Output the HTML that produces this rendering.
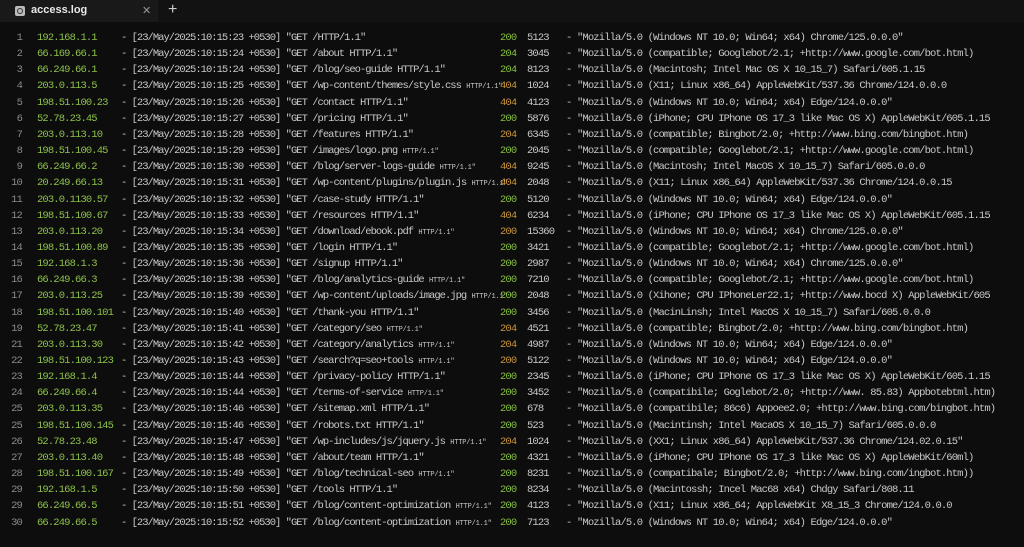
<!DOCTYPE html>
<html><head><meta charset="utf-8"><style>
html,body{margin:0;padding:0;width:1024px;height:547px;background:#0d0d0d;overflow:hidden}
body{font-family:"Liberation Mono","DejaVu Sans Mono",monospace;color:#c9c9c9}
.bar{position:absolute;left:0;top:0;width:1024px;height:22px;background:#121212}
.tab{position:absolute;left:0;top:0;width:158px;height:22px;background:#191919;font-family:"Liberation Sans",sans-serif;font-size:11px;font-weight:bold;color:#e8e8e8}
.tab .ic{position:absolute;left:15px;top:6px;width:10px;height:10px;border-radius:2px;background:#bbb}
.tab .ic:after{content:"";position:absolute;left:2px;top:2px;width:4px;height:4px;border:1px solid #333;border-radius:50%}
.tab .t{position:absolute;left:31px;top:4px}
.tab .x{position:absolute;left:142px;top:4px;font-weight:normal;color:#999;font-size:11px}
.plus{position:absolute;left:168px;top:1px;color:#ccc;font-family:"Liberation Sans",sans-serif;font-size:16px}
.r{position:absolute;left:0;height:16px;width:1024px;font-size:10.5px;letter-spacing:-0.87px;line-height:16px;white-space:pre}
.r span{position:absolute;top:0}
.n{right:1002px;color:#8a8a8a;text-align:right}
.ip{left:37px;color:#8cc04a}
.r span.m{left:121px;letter-spacing:-0.99px}
.s{left:500px}
.g{color:#86bf3e}.a{color:#c8953a}
.z{left:527px}
.d{left:566px}
.u{left:577px}
small{font-size:7px;letter-spacing:-0.2px}
</style></head><body>
<div class="bar"></div>
<div class="tab"><div class="ic"></div><div class="t">access.log</div><div class="x">✕</div></div>
<div class="plus">+</div>
<div class="r" style="top:30px"><span class="n">1</span><span class="ip">192.168.1.1</span><span class="m">- [23/May/2025:10:15:23 +0530] "GET /HTTP/1.1"</span><span class="s g">200</span><span class="z">5123</span><span class="d">-</span><span class="u">"Mozilla/5.0 (Windows NT 10.0; Win64; x64) Chrome/125.0.0.0"</span></div>
<div class="r" style="top:46.15px"><span class="n">2</span><span class="ip">66.169.66.1</span><span class="m">- [23/May/2025:10:15:24 +0530] "GET /about HTTP/1.1"</span><span class="s g">204</span><span class="z">3045</span><span class="d">-</span><span class="u">"Mozilla/5.0 (compatible; Googlebot/2.1; +http://www.google.com/bot.html)</span></div>
<div class="r" style="top:62.3px"><span class="n">3</span><span class="ip">66.249.66.1</span><span class="m">- [23/May/2025:10:15:24 +0530] "GET /blog/seo-guide HTTP/1.1"</span><span class="s g">204</span><span class="z">8123</span><span class="d">-</span><span class="u">"Mozilla/5.0 (Macintosh; Intel Mac OS X 10_15_7) Safari/605.1.15</span></div>
<div class="r" style="top:78.45px"><span class="n">4</span><span class="ip">203.0.113.5</span><span class="m">- [23/May/2025:10:15:25 +0530] "GET /wp-content/themes/style.css <small>HTTP/1.1"</small></span><span class="s a">404</span><span class="z">1024</span><span class="d">-</span><span class="u">"Mozilla/5.0 (X11; Linux x86_64) AppleWebKit/537.36 Chrome/124.0.0.0</span></div>
<div class="r" style="top:94.6px"><span class="n">5</span><span class="ip">198.51.100.23</span><span class="m">- [23/May/2025:10:15:26 +0530] "GET /contact HTTP/1.1"</span><span class="s a">404</span><span class="z">4123</span><span class="d">-</span><span class="u">"Mozilla/5.0 (Windows NT 10.0; Win64; x64) Edge/124.0.0.0"</span></div>
<div class="r" style="top:110.75px"><span class="n">6</span><span class="ip">52.78.23.45</span><span class="m">- [23/May/2025:10:15:27 +0530] "GET /pricing HTTP/1.1"</span><span class="s g">200</span><span class="z">5876</span><span class="d">-</span><span class="u">"Mozilla/5.0 (iPhone; CPU IPhone OS 17_3 like Mac OS X) AppleWebKit/605.1.15</span></div>
<div class="r" style="top:126.9px"><span class="n">7</span><span class="ip">203.0.113.10</span><span class="m">- [23/May/2025:10:15:28 +0530] "GET /features HTTP/1.1"</span><span class="s a">204</span><span class="z">6345</span><span class="d">-</span><span class="u">"Mozilla/5.0 (compatible; Bingbot/2.0; +http://www.bing.com/bingbot.htm)</span></div>
<div class="r" style="top:143.05px"><span class="n">8</span><span class="ip">198.51.100.45</span><span class="m">- [23/May/2025:10:15:29 +0530] "GET /images/logo.png <small>HTTP/1.1"</small></span><span class="s g">200</span><span class="z">2045</span><span class="d">-</span><span class="u">"Mozilla/5.0 (compatible; Googlebot/2.1; +http://www.google.com/bot.html)</span></div>
<div class="r" style="top:159.2px"><span class="n">9</span><span class="ip">66.249.66.2</span><span class="m">- [23/May/2025:10:15:30 +0530] "GET /blog/server-logs-guide <small>HTTP/1.1"</small></span><span class="s a">404</span><span class="z">9245</span><span class="d">-</span><span class="u">"Mozilla/5.0 (Macintosh; Intel MacOS X 10_15_7) Safari/605.0.0.0</span></div>
<div class="r" style="top:175.35px"><span class="n">10</span><span class="ip">20.249.66.13</span><span class="m">- [23/May/2025:10:15:31 +0530] "GET /wp-content/plugins/plugin.js <small>HTTP/1.1"</small></span><span class="s a">404</span><span class="z">2048</span><span class="d">-</span><span class="u">"Mozilla/5.0 (X11; Linux x86_64) AppleWebKit/537.36 Chrome/124.0.0.15</span></div>
<div class="r" style="top:191.5px"><span class="n">11</span><span class="ip">203.0.1130.57</span><span class="m">- [23/May/2025:10:15:32 +0530] "GET /case-study HTTP/1.1"</span><span class="s g">200</span><span class="z">5120</span><span class="d">-</span><span class="u">"Mozilla/5.0 (Windows NT 10.0; Win64; x64) Edge/124.0.0.0"</span></div>
<div class="r" style="top:207.65px"><span class="n">12</span><span class="ip">198.51.100.67</span><span class="m">- [23/May/2025:10:15:33 +0530] "GET /resources HTTP/1.1"</span><span class="s a">404</span><span class="z">6234</span><span class="d">-</span><span class="u">"Mozilla/5.0 (iPhone; CPU IPhone OS 17_3 like Mac OS X) AppleWebKit/605.1.15</span></div>
<div class="r" style="top:223.8px"><span class="n">13</span><span class="ip">203.0.113.20</span><span class="m">- [23/May/2025:10:15:34 +0530] "GET /download/ebook.pdf <small>HTTP/1.1"</small></span><span class="s a">200</span><span class="z">15360</span><span class="d">-</span><span class="u">"Mozilla/5.0 (Windows NT 10.0; Win64; x64) Chrome/125.0.0.0"</span></div>
<div class="r" style="top:239.95px"><span class="n">14</span><span class="ip">198.51.100.89</span><span class="m">- [23/May/2025:10:15:35 +0530] "GET /login HTTP/1.1"</span><span class="s g">200</span><span class="z">3421</span><span class="d">-</span><span class="u">"Mozilla/5.0 (compatible; Googlebot/2.1; +http://www.google.com/bot.html)</span></div>
<div class="r" style="top:256.1px"><span class="n">15</span><span class="ip">192.168.1.3</span><span class="m">- [23/May/2025:10:15:36 +0530] "GET /signup HTTP/1.1"</span><span class="s g">200</span><span class="z">2987</span><span class="d">-</span><span class="u">"Mozilla/5.0 (Windows NT 10.0; Win64; x64) Chrome/125.0.0.0"</span></div>
<div class="r" style="top:272.25px"><span class="n">16</span><span class="ip">66.249.66.3</span><span class="m">- [23/May/2025:10:15:38 +0530] "GET /blog/analytics-guide <small>HTTP/1.1"</small></span><span class="s g">200</span><span class="z">7210</span><span class="d">-</span><span class="u">"Mozilla/5.0 (compatible; Googlebot/2.1; +http://www.google.com/bot.html)</span></div>
<div class="r" style="top:288.4px"><span class="n">17</span><span class="ip">203.0.113.25</span><span class="m">- [23/May/2025:10:15:39 +0530] "GET /wp-content/uploads/image.jpg <small>HTTP/1.1"</small></span><span class="s g">200</span><span class="z">2048</span><span class="d">-</span><span class="u">"Mozilla/5.0 (Xihone; CPU IPhoneLer22.1; +http://www.bocd X) AppleWebKit/605</span></div>
<div class="r" style="top:304.55px"><span class="n">18</span><span class="ip">198.51.100.101</span><span class="m">- [23/May/2025:10:15:40 +0530] "GET /thank-you HTTP/1.1"</span><span class="s g">200</span><span class="z">3456</span><span class="d">-</span><span class="u">"Mozilla/5.0 (MacinLinsh; Intel MacOS X 10_15_7) Safari/605.0.0.0</span></div>
<div class="r" style="top:320.7px"><span class="n">19</span><span class="ip">52.78.23.47</span><span class="m">- [23/May/2025:10:15:41 +0530] "GET /category/seo <small>HTTP/1.1"</small></span><span class="s a">204</span><span class="z">4521</span><span class="d">-</span><span class="u">"Mozilla/5.0 (compatible; Bingbot/2.0; +http://www.bing.com/bingbot.htm)</span></div>
<div class="r" style="top:336.85px"><span class="n">21</span><span class="ip">203.0.113.30</span><span class="m">- [23/May/2025:10:15:42 +0530] "GET /category/analytics <small>HTTP/1.1"</small></span><span class="s a">204</span><span class="z">4987</span><span class="d">-</span><span class="u">"Mozilla/5.0 (Windows NT 10.0; Win64; x64) Edge/124.0.0.0"</span></div>
<div class="r" style="top:353px"><span class="n">22</span><span class="ip">198.51.100.123</span><span class="m">- [23/May/2025:10:15:43 +0530] "GET /search?q=seo+tools <small>HTTP/1.1"</small></span><span class="s a">200</span><span class="z">5122</span><span class="d">-</span><span class="u">"Mozilla/5.0 (Windows NT 10.0; Win64; x64) Edge/124.0.0.0"</span></div>
<div class="r" style="top:369.15px"><span class="n">23</span><span class="ip">192.168.1.4</span><span class="m">- [23/May/2025:10:15:44 +0530] "GET /privacy-policy HTTP/1.1"</span><span class="s g">200</span><span class="z">2345</span><span class="d">-</span><span class="u">"Mozilla/5.0 (iPhone; CPU IPhone OS 17_3 like Mac OS X) AppleWebKit/605.1.15</span></div>
<div class="r" style="top:385.3px"><span class="n">24</span><span class="ip">66.249.66.4</span><span class="m">- [23/May/2025:10:15:44 +0530] "GET /terms-of-service <small>HTTP/1.1"</small></span><span class="s g">200</span><span class="z">3452</span><span class="d">-</span><span class="u">"Mozilla/5.0 (compatibile; Goglebot/2.0; +http://www. 85.83) Appbotebtml.htm)</span></div>
<div class="r" style="top:401.45px"><span class="n">25</span><span class="ip">203.0.113.35</span><span class="m">- [23/May/2025:10:15:46 +0530] "GET /sitemap.xml HTTP/1.1"</span><span class="s g">200</span><span class="z">678</span><span class="d">-</span><span class="u">"Mozilla/5.0 (compatibile; 86c6) Appoee2.0; +http://www.bing.com/bingbot.htm)</span></div>
<div class="r" style="top:417.6px"><span class="n">25</span><span class="ip">198.51.100.145</span><span class="m">- [23/May/2025:10:15:46 +0530] "GET /robots.txt HTTP/1.1"</span><span class="s g">200</span><span class="z">523</span><span class="d">-</span><span class="u">"Mozilla/5.0 (Macintinsh; Intel MacaOS X 10_15_7) Safari/605.0.0.0</span></div>
<div class="r" style="top:433.75px"><span class="n">26</span><span class="ip">52.78.23.48</span><span class="m">- [23/May/2025:10:15:47 +0530] "GET /wp-includes/js/jquery.js <small>HTTP/1.1"</small></span><span class="s a">204</span><span class="z">1024</span><span class="d">-</span><span class="u">"Mozilla/5.0 (XX1; Linux x86_64) AppleWebKit/537.36 Chrome/124.02.0.15"</span></div>
<div class="r" style="top:449.9px"><span class="n">27</span><span class="ip">203.0.113.40</span><span class="m">- [23/May/2025:10:15:48 +0530] "GET /about/team HTTP/1.1"</span><span class="s g">200</span><span class="z">4321</span><span class="d">-</span><span class="u">"Mozilla/5.0 (iPhone; CPU IPhone OS 17_3 like Mac OS X) AppleWebKit/60ml)</span></div>
<div class="r" style="top:466.05px"><span class="n">28</span><span class="ip">198.51.100.167</span><span class="m">- [23/May/2025:10:15:49 +0530] "GET /blog/technical-seo <small>HTTP/1.1"</small></span><span class="s g">200</span><span class="z">8231</span><span class="d">-</span><span class="u">"Mozilla/5.0 (compatibale; Bingbot/2.0; +http://www.bing.com/ingbot.htm))</span></div>
<div class="r" style="top:482.2px"><span class="n">29</span><span class="ip">192.168.1.5</span><span class="m">- [23/May/2025:10:15:50 +0530] "GET /tools HTTP/1.1"</span><span class="s g">200</span><span class="z">8234</span><span class="d">-</span><span class="u">"Mozilla/5.0 (Macintossh; Incel Mac68 x64) Chdgy Safari/808.11</span></div>
<div class="r" style="top:498.35px"><span class="n">29</span><span class="ip">66.249.66.5</span><span class="m">- [23/May/2025:10:15:51 +0530] "GET /blog/content-optimization <small>HTTP/1.1"</small></span><span class="s g">200</span><span class="z">4123</span><span class="d">-</span><span class="u">"Mozilla/5.0 (X11; Linux x86_64; AppleWebKit X8_15_3 Chrome/124.0.0.0</span></div>
<div class="r" style="top:514.5px"><span class="n">30</span><span class="ip">66.249.66.5</span><span class="m">- [23/May/2025:10:15:52 +0530] "GET /blog/content-optimization <small>HTTP/1.1"</small></span><span class="s g">200</span><span class="z">7123</span><span class="d">-</span><span class="u">"Mozilla/5.0 (Windows NT 10.0; Win64; x64) Edge/124.0.0.0"</span></div>
</body></html>
